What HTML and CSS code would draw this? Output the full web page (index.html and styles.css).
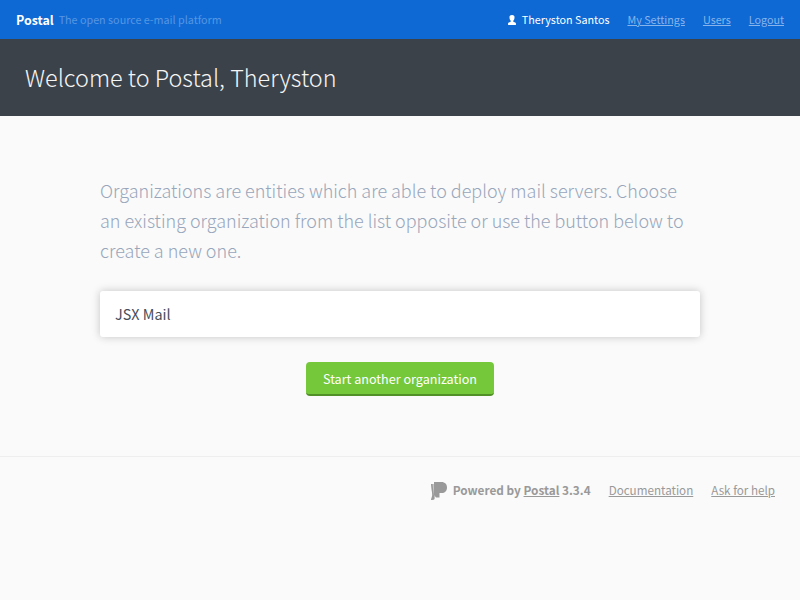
FILE: index.html
```html
<!DOCTYPE html>
<html lang="en">
<head>
<meta charset="utf-8">
<title>Welcome to Postal</title>
<link rel="stylesheet" href="styles.css">
</head>
<body>
<header class="site-header">
  <div class="brand"><span class="brand-name">Postal</span><span class="brand-tagline">The open source e-mail platform</span></div>
  <nav class="site-nav">
    <span class="user"><svg class="user-icon" viewBox="0 0 8 10"><path d="M4 0C2.1 0 1.3 1 1.5 2.7C1.6 4.2 2 5 2.7 5.6V6.8L.8 7.5C.2 7.8 0 8.2 0 9V9.6Q0 10 .4 10H7.6Q8 10 8 9.6V9C8 8.2 7.8 7.8 7.2 7.5L5.3 6.8V5.6C6 5 6.4 4.2 6.5 2.7C6.7 1 5.9 0 4 0Z"/></svg><span class="user-name">Theryston Santos</span></span>
    <a class="nav-link" href="#">My Settings</a>
    <a class="nav-link" href="#">Users</a>
    <a class="nav-link" href="#">Logout</a>
  </nav>
</header>
<div class="page-header"><h1 class="page-title">Welcome to Postal, Theryston</h1></div>
<main class="content">
  <p class="intro">Organizations are entities which are able to deploy mail servers. Choose an existing organization from the list opposite or use the button below to create a new one.</p>
  <a class="org" href="#"><span>JSX Mail</span></a>
  <a class="button" href="#"><span>Start another organization</span></a>
</main>
<footer class="site-footer">
  <svg class="logo" viewBox="0 0 16 18"><path class="logo-back" d="M0 2H4V15L3 18H0L1.5 14Z"/><path class="logo-edge" d="M0 2H1.5L2.4 10L3.5 17L1 18H0L1.3 13Z"/><path class="logo-front" d="M3 0H10.5C14 0 16 2.3 16 5.4C16 8.8 14 11 10.5 11H8.5V15.5H5L3 13Z"/></svg>
  <span class="powered">Powered by <a class="footer-link" href="#">Postal</a> 3.3.4</span>
  <a class="footer-link" href="#">Documentation</a>
  <a class="footer-link" href="#">Ask for help</a>
</footer>
</body>
</html>
```
FILE: styles.css
```css
* { box-sizing: border-box; }
body { margin: 0; background: #fafafa; font-family: "Source Sans Pro", "Noto Sans CJK SC", sans-serif; color: #474e57; }
.site-header { display: flex; justify-content: space-between; align-items: center; height: 39px; padding: 0 16px; background: #0e69d5; }
.brand, .site-nav, .user { display: flex; align-items: center; }
.brand { gap: 5px; line-height: 20px; }
.brand-name { font-size: 12.4px; font-weight: 700; color: #fff; }
.brand-tagline { font-size: 10.75px; color: #5696e2; }
.site-nav { gap: 18px; font-size: 10.75px; line-height: 20px; }
.user { gap: 6px; color: #fff; }
.user-icon { width: 8px; height: 10px; fill: #fff; }
.nav-link { color: #87b4ea; }
.page-header { display: flex; align-items: center; height: 77px; padding: 0 25px 2px; background: #3c4249; }
.page-title { margin: 0; font-size: 23.4px; font-weight: 300; line-height: 36px; color: #f4f5f5; }
.content { display: flex; flex-direction: column; width: 600px; margin: 59px auto 60px; }
.intro { margin: 0 0 26px; font-size: 17.97px; font-weight: 300; line-height: 30px; color: #98a6bb; }
.org { display: flex; align-items: center; height: 46px; padding: 0 15px 2px; margin-bottom: 25px; border-radius: 3px; background: #fff; box-shadow: 0 0 8px rgba(0,0,0,.22); color: #474e57; font-size: 14.4px; text-decoration: none; }
.button { align-self: center; display: flex; align-items: center; justify-content: center; width: 188px; height: 34px; border-radius: 4px; border-bottom: 2px solid #518f27; background: #76c83b; color: #fff; font-size: 12.6px; text-decoration: none; }
.site-footer { display: flex; align-items: center; justify-content: flex-end; height: 69px; padding: 0 25px 3px; border-top: 1px solid #eee; font-size: 11.65px; line-height: 18px; color: #999; }
.logo { width: 16px; height: 18px; margin: 2px 6px 0 0; }
.logo-front, .logo-edge { fill: #999; }
.logo-back { fill: #c4c4c4; }
.powered { font-weight: 700; font-size: 11.8px; }
.footer-link { color: #999; }
.site-footer > .footer-link { margin-left: 18px; }
```
